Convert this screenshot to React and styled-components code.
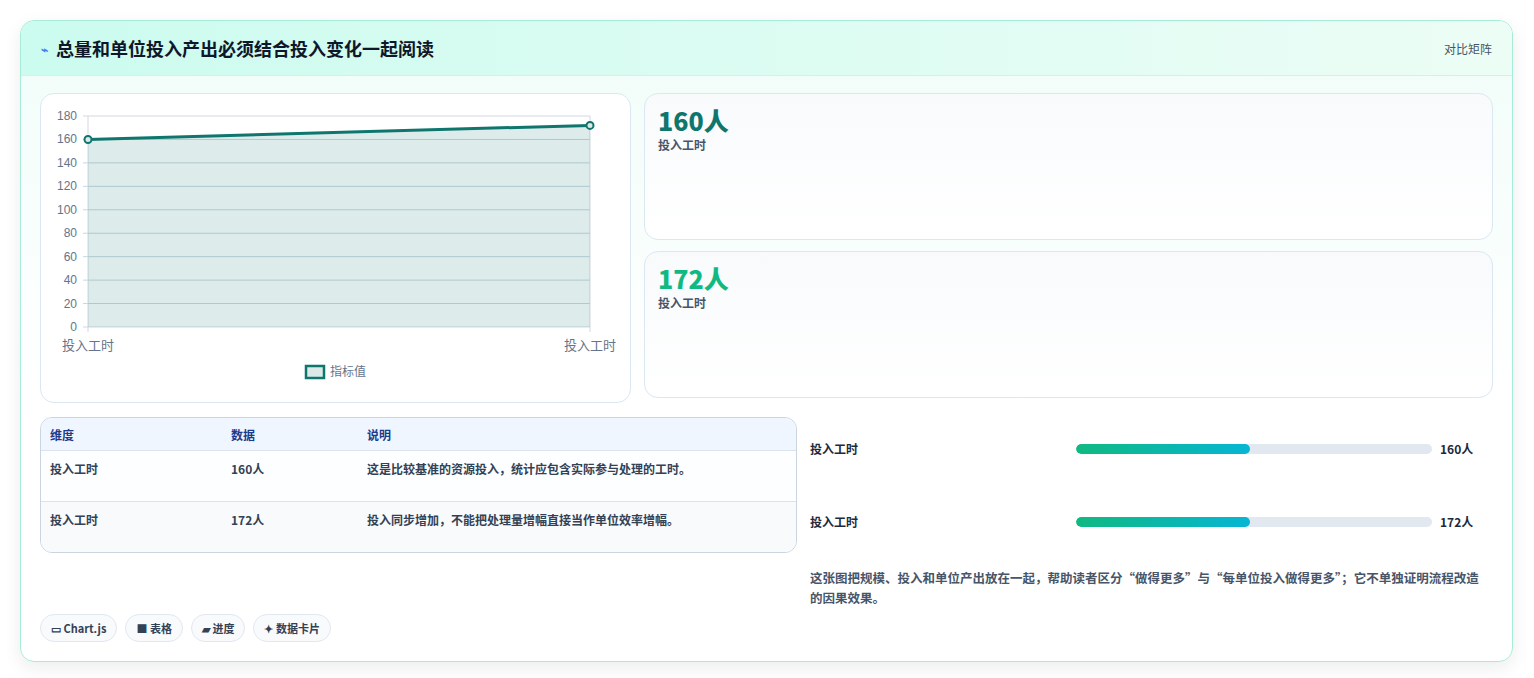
import React from "react";
import styled, { createGlobalStyle } from "styled-components";

const Global = createGlobalStyle`
  body { margin: 0; background: #ffffff; font-family: "Noto Sans CJK SC", "Noto Sans", sans-serif; }
`;

const Page = styled.div`
  padding: 20px 21px 20px 20px;
`;

const Panel = styled.section`
  border: 1px solid #a7ebd9;
  border-radius: 14px;
  background: linear-gradient(180deg, #f0fdf8 0%, #ffffff 60%);
  box-shadow: 0 6px 18px rgba(15, 23, 42, 0.08);
  overflow: hidden;
`;

const Header = styled.header`
  height: 54px;
  display: flex;
  align-items: center;
  justify-content: space-between;
  padding: 0 20px;
  background: linear-gradient(90deg, #ccfbef 0%, #ecfdf5 100%);
  border-bottom: 1px solid #d5f0ea;
`;

const Title = styled.h2`
  margin: 0;
  display: flex;
  align-items: center;
  gap: 8px;
  font-size: 18px;
  font-weight: 700;
  color: #0f172a;
`;

const HeaderTag = styled.span`
  font-size: 12px;
  color: #475569;
`;

const Body = styled.div`
  padding: 17px 19px 19px 19px;
  display: flex;
  flex-direction: column;
`;

const TopGrid = styled.div`
  display: grid;
  grid-template-columns: 591px 1fr;
  gap: 13px;
`;

const Card = styled.div`
  background: linear-gradient(180deg, #f8fafc 0%, #ffffff 100%);
  border: 1px solid #dbe7f1;
  border-radius: 14px;
`;

const ChartCard = styled(Card)`
  height: 308px;
  background: #ffffff;
`;

const Stack = styled.div`
  display: flex;
  flex-direction: column;
  gap: 11px;
`;

const StatCard = styled(Card)`
  height: 147px;
  box-sizing: border-box;
  padding: 10px 13px;
`;

const StatValue = styled.div`
  font-size: 25px;
  font-weight: 800;
  line-height: 32px;
  color: ${(p) => p.color};
`;

const StatLabel = styled.div`
  font-size: 12px;
  font-weight: 600;
  color: #475569;
`;

const BottomGrid = styled.div`
  display: grid;
  grid-template-columns: 757px 1fr;
  gap: 13px;
  margin-top: 14px;
`;

const Table = styled.div`
  border: 1px solid #cbd5e1;
  border-radius: 12px;
  overflow: hidden;
  background: #f8fafc;
  align-self: start;
`;

const Row = styled.div`
  display: grid;
  grid-template-columns: 181px 136px 1fr;
  padding: 0 9px;
  height: ${(p) => (p.head ? "32px" : "51px")};
  align-items: ${(p) => (p.head ? "center" : "start")};
  padding-top: ${(p) => (p.head ? "0" : "9px")};
  box-sizing: border-box;
  background: ${(p) => (p.head ? "#eff6ff" : p.alt ? "#f8fafc" : "#fdfeff")};
  border-top: ${(p) => (p.first ? "none" : "1px solid #dbe3ec")};
  font-size: 12px;
  font-weight: 600;
  color: ${(p) => (p.head ? "#1e3a8a" : "#334155")};
`;

const Right = styled.div`
  display: flex;
  flex-direction: column;
`;

const BarRow = styled.div`
  display: grid;
  grid-template-columns: 258px 356px 1fr;
  column-gap: 8px;
  align-items: center;
  height: 73px;
  font-size: 12px;
  font-weight: 600;
  color: #1e293b;
  padding-bottom: 0;
  &:first-child { margin-top: -5px; }
`;

const Track = styled.div`
  height: 10px;
  border-radius: 5px;
  background: #e2e8f0;
  overflow: hidden;
`;

const Fill = styled.div`
  height: 100%;
  border-radius: 5px;
  background: linear-gradient(90deg, #10b981, #06b6d4);
`;

const Note = styled.p`
  margin: 10px 0 0;
  font-size: 12.5px;
  line-height: 20px;
  font-weight: 600;
  color: #475569;
  padding-right: 6px;
`;

const Chips = styled.div`
  display: flex;
  gap: 8px;
  margin-top: 6px;
`;

const Chip = styled.span`
  display: inline-flex;
  align-items: center;
  gap: 3px;
  height: 26px;
  padding: 0 10px;
  border: 1px solid #e2e8f0;
  border-radius: 14px;
  background: #f8fafc;
  font-size: 11px;
  font-weight: 600;
  color: #334155;
`;

const LineChart = () => {
  const ticks = [180, 160, 140, 120, 100, 80, 60, 40, 20, 0];
  const y = (v) => 326 - (v / 180) * 211 - 93;
  const x0 = 47, x1 = 549;
  return (
    <svg width="590" height="306" style={{ display: "block" }} fontFamily="Liberation Sans, Noto Sans CJK SC, sans-serif">
      {ticks.map((t) => (
        <g key={t}>
          <line x1={x0 - 5} x2={x1} y1={y(t)} y2={y(t)} stroke={t === 0 || t === 180 ? "#d1d9e2" : "#c8d6e0"} />
          <text x={x0 - 11} y={y(t) + 4} fontSize="12" fill="#64748b" textAnchor="end">{t}</text>
        </g>
      ))}
      <line x1={x0} x2={x0} y1={y(180)} y2={y(0) + 5} stroke="#d1d9e2" />
      <line x1={x1} x2={x1} y1={y(180)} y2={y(0) + 5} stroke="#d1d9e2" />
      <polygon points={`${x0},${y(160)} ${x1},${y(172)} ${x1},${y(0)} ${x0},${y(0)}`} fill="rgba(15,118,110,0.14)" />
      <line x1={x0} y1={y(160)} x2={x1} y2={y(172)} stroke="#0f766e" strokeWidth="3" />
      <circle cx={x0} cy={y(160)} r="3.5" fill="#dbeae8" stroke="#0f766e" strokeWidth="2" />
      <circle cx={x1} cy={y(172)} r="3.5" fill="#dbeae8" stroke="#0f766e" strokeWidth="2" />
      <text x={x0} y={256} fontSize="13" fill="#64748b" textAnchor="middle">投入工时</text>
      <text x={x1} y={256} fontSize="13" fill="#64748b" textAnchor="middle">投入工时</text>
      <rect x="265" y="272" width="18" height="12" fill="#dbeae8" stroke="#0f766e" strokeWidth="2.5" />
      <text x="289" y="282" fontSize="12" fill="#64748b">指标值</text>
    </svg>
  );
};

const rows = [
  ["投入工时", "160人", "这是比较基准的资源投入，统计应包含实际参与处理的工时。"],
  ["投入工时", "172人", "投入同步增加，不能把处理量增幅直接当作单位效率增幅。"],
];

export default function App() {
  return (
    <Page>
      <Global />
      <Panel>
        <Header>
          <Title>
            <span style={{ color: "#3b82f6", fontSize: 12 }}>⌁</span>
            总量和单位投入产出必须结合投入变化一起阅读
          </Title>
          <HeaderTag>对比矩阵</HeaderTag>
        </Header>
        <Body>
          <TopGrid>
            <ChartCard>
              <LineChart />
            </ChartCard>
            <Stack>
              <StatCard>
                <StatValue color="#0f766e">160人</StatValue>
                <StatLabel>投入工时</StatLabel>
              </StatCard>
              <StatCard>
                <StatValue color="#10b981">172人</StatValue>
                <StatLabel>投入工时</StatLabel>
              </StatCard>
            </Stack>
          </TopGrid>
          <BottomGrid>
            <Table>
              <Row head first>
                <span>维度</span><span>数据</span><span>说明</span>
              </Row>
              {rows.map((r, i) => (
                <Row key={i} alt={i === 1}>
                  <span>{r[0]}</span><span>{r[1]}</span><span>{r[2]}</span>
                </Row>
              ))}
            </Table>
            <Right>
              {["160人", "172人"].map((v) => (
                <BarRow key={v}>
                  <span>投入工时</span>
                  <Track><Fill style={{ width: "49%" }} /></Track>
                  <span>{v}</span>
                </BarRow>
              ))}
              <Note>这张图把规模、投入和单位产出放在一起，帮助读者区分“做得更多”与“每单位投入做得更多”；它不单独证明流程改造的因果效果。</Note>
            </Right>
          </BottomGrid>
          <Chips>
            <Chip>▭ Chart.js</Chip>
            <Chip>■ 表格</Chip>
            <Chip>▰ 进度</Chip>
            <Chip>✦ 数据卡片</Chip>
          </Chips>
        </Body>
      </Panel>
    </Page>
  );
}
